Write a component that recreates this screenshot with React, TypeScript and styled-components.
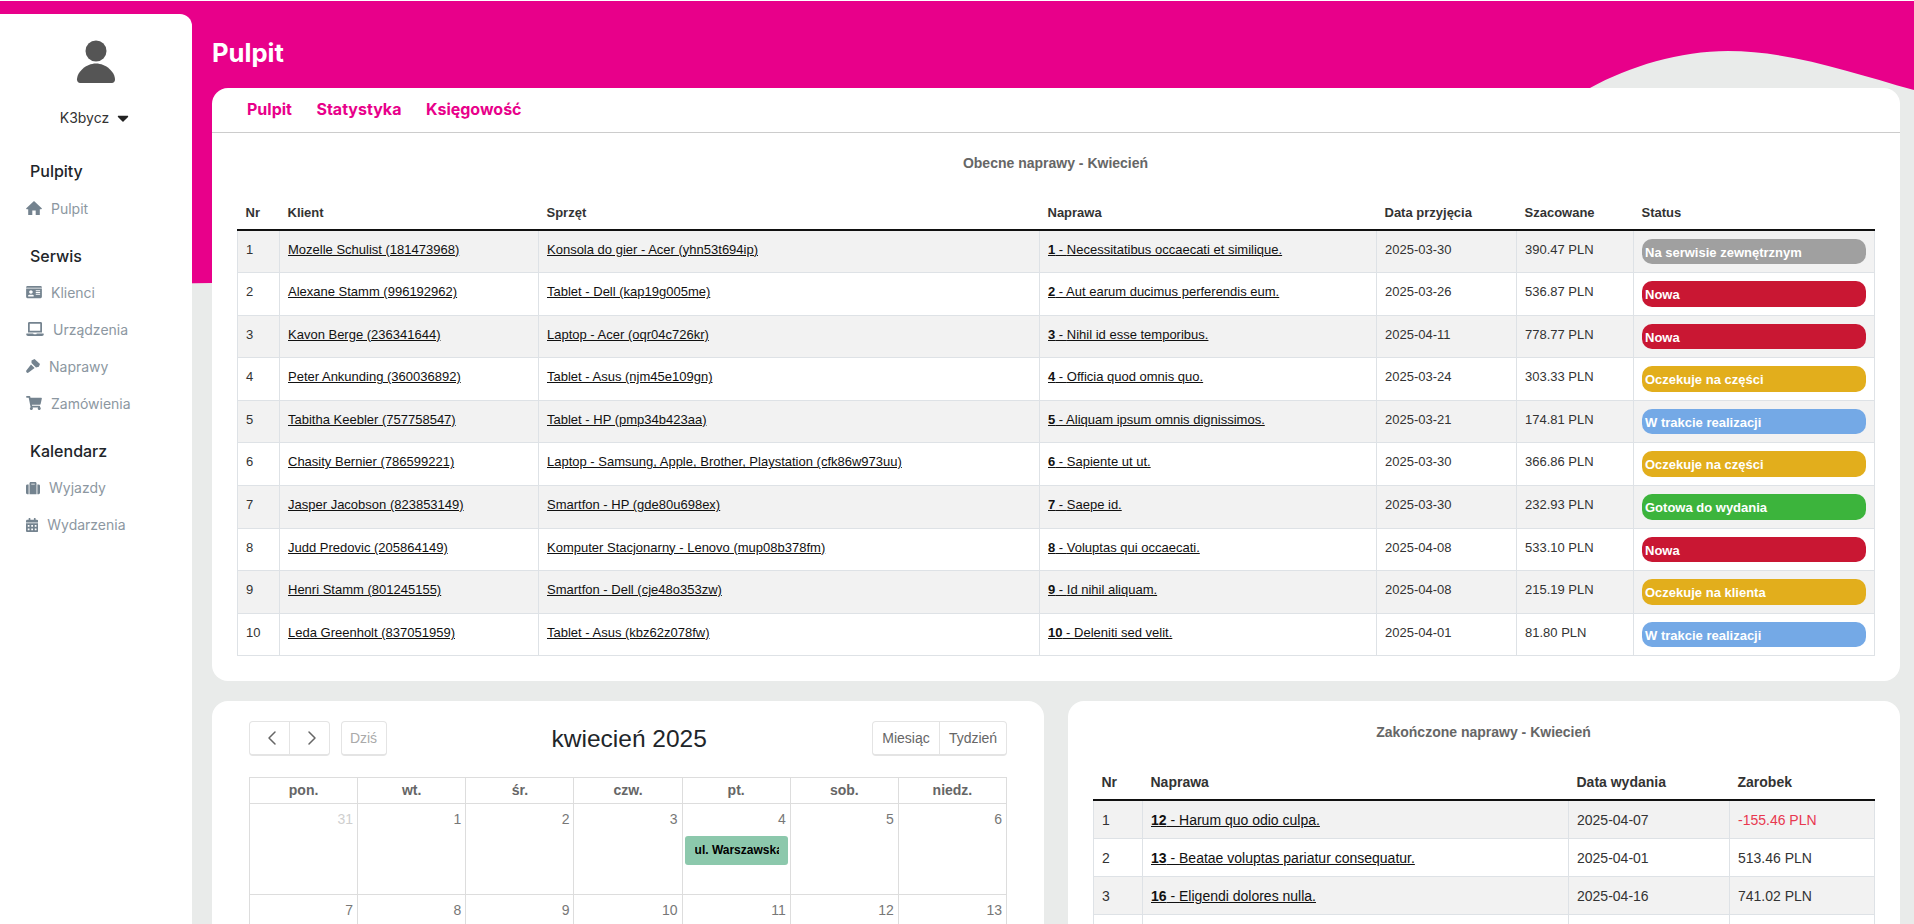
import React from 'react';
import styled, { createGlobalStyle } from 'styled-components';
import {
  FaIdCard,
  FaLaptop,
  FaShoppingCart,
  FaSuitcase,
  FaCalendarAlt,
  FaCaretDown,
} from 'react-icons/fa';
import { LuChevronLeft, LuChevronRight } from 'react-icons/lu';

const colors = {
  pink: '#e8008a',
  page: '#e9ebea',
  text: '#333333',
  link: '#111111',
  line: '#dee2e6',
  navText: '#8c97a1',
  navIcon: '#74838f',
};

const GlobalStyle = createGlobalStyle`
  html, body {
    margin: 0;
    padding: 0;
    background: ${colors.page};
  }
  * {
    box-sizing: border-box;
  }
`;

const Page = styled.div`
  position: relative;
  display: flex;
  height: 100vh;
  overflow: hidden;
  border-top: 1px solid #ffffff;
  background: ${colors.page};
  font-family: 'Liberation Sans', Arial, sans-serif;
`;

const Wave = styled.svg`
  position: absolute;
  top: 0;
  left: 0;
  display: block;
`;

const Sidebar = styled.aside`
  position: relative;
  flex: 0 0 192px;
  margin-top: 13px;
  padding-top: 26px;
  background: #ffffff;
  border-top-right-radius: 12px;
  font-family: Inter, sans-serif;
`;

const Avatar = styled.svg`
  display: block;
  margin: 0 auto;
`;

const UserName = styled.div`
  display: flex;
  align-items: center;
  justify-content: center;
  gap: 5px;
  margin: 24px 0;
  font-size: 14px;
  line-height: 20px;
  color: #333333;
`;

const NavHeading = styled.div`
  height: 37.7px;
  padding-left: 30px;
  font-size: 16px;
  font-weight: 500;
  line-height: 38px;
  color: #212529;
`;

const NavGroup = styled.div`
  margin-bottom: 9.5px;

  & + & ${NavHeading} {
    line-height: 40px;
  }
`;

const NavItem = styled.a<{ $iconWidth: number }>`
  display: flex;
  align-items: center;
  gap: 9px;
  height: 37px;
  padding-left: 26px;
  font-size: 14px;
  color: ${colors.navText};

  svg {
    flex: none;
    width: ${props => props.$iconWidth}px;
    height: 14px;
    color: ${colors.navIcon};
  }
`;

const Main = styled.main`
  position: relative;
  flex: 1;
  min-width: 0;
  padding: 0 14px 0 20px;
`;

const PageTitle = styled.h1`
  height: 87px;
  margin: 0;
  padding-top: 33px;
  font-family: Inter, sans-serif;
  font-size: 25.6px;
  font-weight: 700;
  line-height: 38px;
  color: #ffffff;
`;

const Card = styled.section`
  background: #ffffff;
  border-radius: 16px;
`;

const Tabs = styled.nav`
  display: flex;
  gap: 24.5px;
  height: 45px;
  padding-left: 35px;
  border-bottom: 1px solid #cccccc;
  font-family: Inter, sans-serif;
  font-size: 16px;
  font-weight: 700;
  line-height: 42px;
  color: ${colors.pink};
`;

const CardBody = styled.div`
  padding: 0 26px 25px 25px;
`;

const TableTitle = styled.div<{ $height: number; $lineHeight: number }>`
  height: ${props => props.$height}px;
  font-size: 14px;
  font-weight: 700;
  line-height: ${props => props.$lineHeight}px;
  text-align: center;
  color: #666666;
`;

const Table = styled.table<{ $size: number }>`
  width: 100%;
  table-layout: fixed;
  border-collapse: collapse;
  font-size: ${props => props.$size}px;
  line-height: 1.5;
  color: ${colors.text};

  th {
    padding: 9px 8px 6px;
    border-bottom: 2px solid #111111;
    font-weight: 700;
    text-align: left;
  }

  td {
    padding: 9px 8px 7px;
    border: 1px solid ${colors.line};
    vertical-align: top;
  }

  tbody tr:nth-child(odd) {
    background: #f2f2f2;
  }
`;

const Cell = styled.a`
  color: ${colors.link};
  text-decoration: underline;
`;

const Profit = styled.span<{ $loss: boolean }>`
  color: ${props => (props.$loss ? '#e8384f' : 'inherit')};
`;

const Badge = styled.div<{ $color: string }>`
  height: 25.6px;
  margin: -1px 0 1px;
  padding: 3px 3px 0;
  border-radius: 10px;
  background: ${props => props.$color};
  font-weight: 700;
  line-height: 21px;
  white-space: nowrap;
  color: #ffffff;
`;

const BottomRow = styled.div`
  display: grid;
  grid-template-columns: minmax(0, 1fr) minmax(0, 1fr);
  gap: 24px;
  margin-top: 20px;
`;

const CalendarBody = styled.div`
  padding: 20px 37px 25px;
  font-size: 14px;
  color: #666666;
`;

const Toolbar = styled.div`
  display: flex;
  align-items: center;
  justify-content: space-between;
  margin-bottom: 21px;
`;

const ToolGroup = styled.div`
  display: flex;
  gap: 11px;
`;

const ButtonPair = styled.div`
  display: flex;
  height: 35px;
  border: 1px solid #e4e4e4;
  border-bottom-width: 2px;
  border-radius: 4px;
`;

const ToolButton = styled.div<{ $width: number; $muted?: boolean }>`
  display: flex;
  align-items: center;
  justify-content: center;
  width: ${props => props.$width}px;
  color: ${props => (props.$muted ? '#aaaaaa' : '#666666')};

  & + & {
    border-left: 1px solid #e4e4e4;
  }
`;

const ArrowButton = styled(ToolButton)`
  padding-left: 5px;
`;

const CalendarTitle = styled.h2`
  margin: 0;
  font-size: 24.5px;
  font-weight: 400;
  color: #212529;
`;

const CalendarGrid = styled.div`
  display: grid;
  grid-template-columns: repeat(7, minmax(0, 1fr));
  border-top: 1px solid #dddddd;
  border-left: 1px solid #dddddd;
`;

const WeekDay = styled.div`
  height: 26px;
  border-right: 1px solid #dddddd;
  border-bottom: 1px solid #dddddd;
  font-weight: 700;
  line-height: 24px;
  text-align: center;
`;

const Day = styled.div<{ $other?: boolean }>`
  height: 91px;
  padding: 5px 4px 0;
  border-right: 1px solid #dddddd;
  border-bottom: 1px solid #dddddd;
  line-height: 20px;
  text-align: right;
  color: ${props => (props.$other ? '#cfcfcf' : '#777777')};
`;

const CalendarEvent = styled.div`
  height: 29px;
  margin: 7px -2px 0;
  padding: 0 9px 0 10px;
  border-radius: 3px;
  background: #8cc8ac;
  overflow: hidden;
  font-size: 12px;
  font-weight: 700;
  line-height: 29px;
  text-align: left;
  color: #000000;
`;

const EventLabel = styled.div`
  overflow: hidden;
  white-space: nowrap;
`;

function HomeIcon() {
  return (
    <svg viewBox="0 0 16 14" fill="currentColor">
      <path d="M8 0 0 7.4 .7 8.2H2.2V14H6.3V9.6H9.7V14H13.8V8.2H15.3L16 7.4Z" />
    </svg>
  );
}

function HammerIcon() {
  return (
    <svg viewBox="0 0 14 14" fill="currentColor">
      <path d="M5.5 1.5 8.5 0 14 5 12.8 7.8 10 8.4 5.5 4Z" />
      <path d="M5 5.4 8.6 9 2.6 13.6C1.8 14.2 1 14 .5 13.3 0 12.6 0 11.8.7 11.1Z" />
    </svg>
  );
}

const navGroups = [
  { title: 'Pulpity', items: [{ label: 'Pulpit', Icon: HomeIcon, width: 16 }] },
  {
    title: 'Serwis',
    items: [
      { label: 'Klienci', Icon: FaIdCard, width: 16 },
      { label: 'Urządzenia', Icon: FaLaptop, width: 18 },
      { label: 'Naprawy', Icon: HammerIcon, width: 14 },
      { label: 'Zamówienia', Icon: FaShoppingCart, width: 16 },
    ],
  },
  {
    title: 'Kalendarz',
    items: [
      { label: 'Wyjazdy', Icon: FaSuitcase, width: 14 },
      { label: 'Wydarzenia', Icon: FaCalendarAlt, width: 12.25 },
    ],
  },
];

const statusColors: Record<string, string> = {
  'Na serwisie zewnętrznym': '#a0a0a0',
  Nowa: '#c91733',
  'Oczekuje na części': '#e2ae1c',
  'W trakcie realizacji': '#74a9e6',
  'Gotowa do wydania': '#3cb43c',
  'Oczekuje na klienta': '#e2ae1c',
};

const repairs = [
  ['Mozelle Schulist (181473968)', 'Konsola do gier - Acer (yhn53t694ip)', '1', 'Necessitatibus occaecati et similique.', '2025-03-30', '390.47 PLN', 'Na serwisie zewnętrznym'],
  ['Alexane Stamm (996192962)', 'Tablet - Dell (kap19g005me)', '2', 'Aut earum ducimus perferendis eum.', '2025-03-26', '536.87 PLN', 'Nowa'],
  ['Kavon Berge (236341644)', 'Laptop - Acer (oqr04c726kr)', '3', 'Nihil id esse temporibus.', '2025-04-11', '778.77 PLN', 'Nowa'],
  ['Peter Ankunding (360036892)', 'Tablet - Asus (njm45e109gn)', '4', 'Officia quod omnis quo.', '2025-03-24', '303.33 PLN', 'Oczekuje na części'],
  ['Tabitha Keebler (757758547)', 'Tablet - HP (pmp34b423aa)', '5', 'Aliquam ipsum omnis dignissimos.', '2025-03-21', '174.81 PLN', 'W trakcie realizacji'],
  ['Chasity Bernier (786599221)', 'Laptop - Samsung, Apple, Brother, Playstation (cfk86w973uu)', '6', 'Sapiente ut ut.', '2025-03-30', '366.86 PLN', 'Oczekuje na części'],
  ['Jasper Jacobson (823853149)', 'Smartfon - HP (gde80u698ex)', '7', 'Saepe id.', '2025-03-30', '232.93 PLN', 'Gotowa do wydania'],
  ['Judd Predovic (205864149)', 'Komputer Stacjonarny - Lenovo (mup08b378fm)', '8', 'Voluptas qui occaecati.', '2025-04-08', '533.10 PLN', 'Nowa'],
  ['Henri Stamm (801245155)', 'Smartfon - Dell (cje48o353zw)', '9', 'Id nihil aliquam.', '2025-04-08', '215.19 PLN', 'Oczekuje na klienta'],
  ['Leda Greenholt (837051959)', 'Tablet - Asus (kbz62z078fw)', '10', 'Deleniti sed velit.', '2025-04-01', '81.80 PLN', 'W trakcie realizacji'],
];

const finished = [
  ['12', 'Harum quo odio culpa.', '2025-04-07', '-155.46 PLN'],
  ['13', 'Beatae voluptas pariatur consequatur.', '2025-04-01', '513.46 PLN'],
  ['16', 'Eligendi dolores nulla.', '2025-04-16', '741.02 PLN'],
];

const weekDays = ['pon.', 'wt.', 'śr.', 'czw.', 'pt.', 'sob.', 'niedz.'];
const days = [31, 1, 2, 3, 4, 5, 6, 7, 8, 9, 10, 11, 12, 13];

export default function App() {
  return (
    <Page>
      <GlobalStyle />
      <Wave width="1914" height="300" viewBox="0 1 1914 300" aria-hidden="true">
        <path
          fill={colors.pink}
          d="M0 1H1914V90C1850 72 1790 51 1728 51C1680 51 1630 66 1590 88C1380 190 900 240 212 283L0 286Z"
        />
      </Wave>

      <Sidebar>
        <Avatar width="40" height="44" viewBox="0 0 40 44">
          <circle cx="20" cy="11" r="10.5" fill="#555555" />
          <path
            fill="#555555"
            d="M1 39.5C1 32 10 23.5 20 23.5S39 32 39 39.5C39 41.5 37.5 43 36 43H4C2.5 43 1 41.5 1 39.5Z"
          />
        </Avatar>
        <UserName>
          K3bycz
          <FaCaretDown size={18} color="#222222" />
        </UserName>
        {navGroups.map(group => (
          <NavGroup key={group.title}>
            <NavHeading>{group.title}</NavHeading>
            {group.items.map(({ label, Icon, width }) => (
              <NavItem key={label} $iconWidth={width}>
                <Icon />
                {label}
              </NavItem>
            ))}
          </NavGroup>
        ))}
      </Sidebar>

      <Main>
        <PageTitle>Pulpit</PageTitle>

        <Card>
          <Tabs>
            <span>Pulpit</span>
            <span>Statystyka</span>
            <span>Księgowość</span>
          </Tabs>
          <CardBody>
            <TableTitle $height={61} $lineHeight={60}>Obecne naprawy - Kwiecień</TableTitle>
            <Table $size={13}>
              <colgroup>
                <col width="42" />
                <col width="259" />
                <col width="501" />
                <col width="337" />
                <col width="140" />
                <col width="117" />
                <col width="241" />
              </colgroup>
              <thead>
                <tr>
                  <th>Nr</th>
                  <th>Klient</th>
                  <th>Sprzęt</th>
                  <th>Naprawa</th>
                  <th>Data przyjęcia</th>
                  <th>Szacowane</th>
                  <th>Status</th>
                </tr>
              </thead>
              <tbody>
                {repairs.map(([client, device, id, name, date, cost, status], index) => (
                  <tr key={id}>
                    <td>{index + 1}</td>
                    <td><Cell>{client}</Cell></td>
                    <td><Cell>{device}</Cell></td>
                    <td><Cell><b>{id}</b> - {name}</Cell></td>
                    <td>{date}</td>
                    <td>{cost}</td>
                    <td><Badge $color={statusColors[status]}>{status}</Badge></td>
                  </tr>
                ))}
              </tbody>
            </Table>
          </CardBody>
        </Card>

        <BottomRow>
          <Card>
            <CalendarBody>
              <Toolbar>
                <ToolGroup>
                  <ButtonPair>
                    <ArrowButton $width={39}><LuChevronLeft size={24} strokeWidth={1.5} /></ArrowButton>
                    <ArrowButton $width={39.5}><LuChevronRight size={24} strokeWidth={1.5} /></ArrowButton>
                  </ButtonPair>
                  <ButtonPair>
                    <ToolButton $width={44} $muted>Dziś</ToolButton>
                  </ButtonPair>
                </ToolGroup>
                <CalendarTitle>kwiecień 2025</CalendarTitle>
                <ButtonPair>
                  <ToolButton $width={66}>Miesiąc</ToolButton>
                  <ToolButton $width={67}>Tydzień</ToolButton>
                </ButtonPair>
              </Toolbar>
              <CalendarGrid>
                {weekDays.map(day => (
                  <WeekDay key={day}>{day}</WeekDay>
                ))}
                {days.map((day, index) => (
                  <Day key={index} $other={index === 0}>
                    {day}
                    {day === 4 && (
                      <CalendarEvent>
                        <EventLabel>ul. Warszawska 12, Kraków</EventLabel>
                      </CalendarEvent>
                    )}
                  </Day>
                ))}
              </CalendarGrid>
            </CalendarBody>
          </Card>

          <Card>
            <CardBody>
              <TableTitle $height={62} $lineHeight={63}>Zakończone naprawy - Kwiecień</TableTitle>
              <Table $size={14}>
                <colgroup>
                  <col width="49" />
                  <col width="426" />
                  <col width="161" />
                  <col width="145" />
                </colgroup>
                <thead>
                  <tr>
                    <th>Nr</th>
                    <th>Naprawa</th>
                    <th>Data wydania</th>
                    <th>Zarobek</th>
                  </tr>
                </thead>
                <tbody>
                  {finished.map(([id, name, date, profit], index) => (
                    <tr key={id}>
                      <td>{index + 1}</td>
                      <td><Cell><b>{id}</b> - {name}</Cell></td>
                      <td>{date}</td>
                      <td><Profit $loss={profit.startsWith('-')}>{profit}</Profit></td>
                    </tr>
                  ))}
                  <tr>
                    <td>&nbsp;</td>
                    <td />
                    <td />
                    <td />
                  </tr>
                </tbody>
              </Table>
            </CardBody>
          </Card>
        </BottomRow>
      </Main>
    </Page>
  );
}
